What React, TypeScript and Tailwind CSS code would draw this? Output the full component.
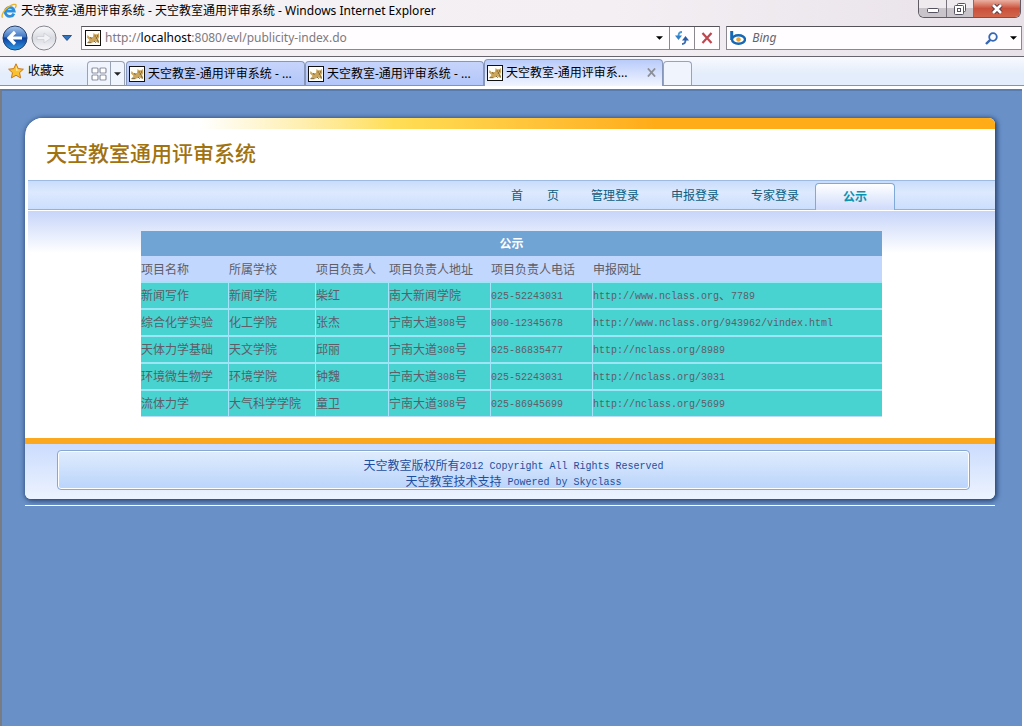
import { Fragment } from 'react'
import type { ReactNode } from 'react'

const PAGE_TITLE = '天空教室-通用评审系统 - 天空教室通用评审系统 - Windows Internet Explorer'

const browserTabs = [
  { id: 1, label: '天空教室-通用评审系统 - ...', active: false },
  { id: 2, label: '天空教室-通用评审系统 - ...', active: false },
  { id: 3, label: '天空教室-通用评审系...', active: true },
]

const navItems = ['首　　页', '管理登录', '申报登录', '专家登录']

const columns = ['项目名称', '所属学校', '项目负责人', '项目负责人地址', '项目负责人电话', '申报网址']

const rows = [
  ['新闻写作', '新闻学院', '柴红', '南大新闻学院', '025-52243031', 'http://www.nclass.org、7789'],
  ['综合化学实验', '化工学院', '张杰', '宁南大道308号', '000-12345678', 'http://www.nclass.org/943962/vindex.html'],
  ['天体力学基础', '天文学院', '邱丽', '宁南大道308号', '025-86835477', 'http://nclass.org/8989'],
  ['环境微生物学', '环境学院', '钟魏', '宁南大道308号', '025-52243031', 'http://nclass.org/3031'],
  ['流体力学', '大气科学学院', '童卫', '宁南大道308号', '025-86945699', 'http://nclass.org/5699'],
]

// Latin runs are set in a half-width mono face so they line up with the Chinese glyphs
function Mixed({ text }: { text: string }) {
  return (
    <>
      {text.split(/([\x20-\x7e]+)/).map((part, i) =>
        i % 2 === 1 ? (
          <span key={i} className="font-['Liberation_Mono',monospace] text-[10px] leading-none align-[1px] whitespace-pre">{part}</span>
        ) : (
          <Fragment key={i}>{part}</Fragment>
        )
      )}
    </>
  )
}

function IeLogo() {
  return (
    <svg viewBox="0 0 16 16" className="w-4 h-4 shrink-0" aria-hidden="true">
      <path d="M12.9 10.6a4.5 4.5 0 1 1 .3-2.4H5" fill="none" stroke="#2a8fdc" strokeWidth="2.8" />
      <path d="M1.6 14.6C-.4 12.4 3.4 6.4 8 3.6 11.5 1.3 14.8.6 15.1 2.2c.2.9-.4 2-1 2.900" fill="none" stroke="#e8b326" strokeWidth="1.4" />
    </svg>
  )
}

function TomcatIcon() {
  return (
    <svg viewBox="0 0 16 16" className="w-4 h-4 shrink-0" aria-hidden="true">
      <rect x=".5" y=".5" width="15" height="15" fill="#fffef8" stroke="#111" />
      <path d="M8 7l.5-4 1.700 1.200h2L14 3l.2 4-1 2 .8 3.500h-2L10.500 11 8 12.500H2.500L4.500 10 2 7.500 2.500 5 4.500 7z" fill="#cba65c" />
      <path d="M2.500 12.700h4M9 11l2 1.700M12.500 9.500l1 3M5 7.500l1.500 1" stroke="#6d5527" strokeWidth=".9" fill="none" />
      <path d="M9.700 6h.9M12 6h.9M10.800 8h1.200" stroke="#4b3a17" strokeWidth="1" fill="none" />
    </svg>
  )
}

function Caret({ className = 'text-black' }: { className?: string }) {
  return (
    <svg viewBox="0 0 8 4" className={`w-[7px] h-1 shrink-0 ${className}`} aria-hidden="true">
      <path d="M0 0h8L4 4z" fill="currentColor" />
    </svg>
  )
}

function RoundButton({ label, forward = false }: { label: string; forward?: boolean }) {
  return (
    <button aria-label={label} className="w-[26px] h-[26px] shrink-0">
      <svg viewBox="0 0 26 26" className="w-full h-full">
        <defs>
          <linearGradient id="backFill" x1="0" y1="0" x2="0" y2="1">
            <stop offset="0" stopColor="#a9c7ec" />
            <stop offset=".45" stopColor="#3f76c4" />
            <stop offset=".5" stopColor="#0c3f9c" />
            <stop offset="1" stopColor="#2f9be8" />
          </linearGradient>
          <linearGradient id="forwardFill" x1="0" y1="0" x2="0" y2="1">
            <stop offset="0" stopColor="#fafafc" />
            <stop offset=".5" stopColor="#d9dbe2" />
            <stop offset="1" stopColor="#f7f7fa" />
          </linearGradient>
        </defs>
        <circle cx="13" cy="13" r="12" fill={forward ? 'url(#forwardFill)' : 'url(#backFill)'} stroke={forward ? '#85878e' : '#24416f'} />
        {forward ? (
          <path d="M6 11.5h7V8l7 5-7 5v-3.5H6z" fill="#f1f2f5" stroke="#c9cbd3" strokeWidth=".7" />
        ) : (
          <path d="M20 13H8M13 7l-6 6 6 6" fill="none" stroke="#fff" strokeWidth="3.2" />
        )}
      </svg>
    </button>
  )
}

function WindowControls() {
  return (
    <div className="flex h-[18px] mr-[3px] shrink-0 rounded-b-md border border-t-0 border-[#5f5a63] overflow-hidden">
      <button aria-label="Minimize" className="w-7 flex justify-center items-center border-r border-[#77727b] bg-linear-to-b from-[#eeeaee] from-50% to-[#c9c4ca] to-50%">
        <svg viewBox="0 0 12 5" className="w-3 h-[5px] mt-1"><rect x=".5" y=".5" width="11" height="4" rx="1" fill="#fff" stroke="#55515f" /></svg>
      </button>
      <button aria-label="Restore" className="w-[27px] flex justify-center items-center border-r border-[#77727b] bg-linear-to-b from-[#eeeaee] from-50% to-[#c9c4ca] to-50%">
        <svg viewBox="0 0 12 12" className="w-3 h-3" fill="#fff" stroke="#55515f">
          <rect x="3.5" y=".5" width="8" height="8" rx="1" />
          <rect x=".5" y="2.5" width="9" height="9" rx="1" />
          <rect x="3.5" y="5.5" width="3" height="3" />
        </svg>
      </button>
      <button aria-label="Close" className="w-[46px] flex justify-center items-center bg-linear-to-b from-[#eab0a2] via-[#c9503a] via-50% to-[#d1664c]">
        <svg viewBox="0 0 12 10" className="w-3 h-2.5">
          <path d="M2 1l8 8M10 1L2 9" stroke="#5a3a42" strokeWidth="4.6" />
          <path d="M2 1l8 8M10 1L2 9" stroke="#fff" strokeWidth="2.6" />
        </svg>
      </button>
    </div>
  )
}

function TitleBar() {
  return (
    <div className="flex h-[26px] items-start">
      <div className="flex flex-1 min-w-0 items-center gap-1 pl-px pt-[2px]">
        <IeLogo />
        <span className="truncate text-black leading-[18px]">{PAGE_TITLE}</span>
      </div>
      <WindowControls />
    </div>
  )
}

function AddressRow() {
  return (
    <div className="flex h-[30px] items-start pl-[2px] pr-[2px]">
      <div className="flex items-center h-6 gap-[3px] mr-2">
        <RoundButton label="Back" />
        <RoundButton label="Forward" forward />
        <button aria-label="Recent pages" className="w-3 flex justify-center ml-px">
          <svg viewBox="0 0 10 6" className="w-2.5 h-1.5"><path d="M.5.5h9L5 5.5z" fill="#3273bd" stroke="#123f7c" strokeWidth=".8" /></svg>
        </button>
      </div>
      <div className="flex flex-1 min-w-0 h-6 border border-[#8b8890] border-t-[#55535a] bg-[#fffdff]">
        <div className="flex flex-1 min-w-0 items-center pl-[3px] pr-1.5 gap-1">
          <TomcatIcon />
          {/* host part is emphasised the way the browser does it */}
          <span className="flex-1 min-w-0 truncate text-[#7c7a80] leading-5">
            http://<span className="text-black">localhost</span>:8080/evl/publicity-index.do
          </span>
          <button aria-label="Show address list"><Caret /></button>
        </div>
        <button aria-label="Refresh" className="w-[25px] border-l border-[#8b8890] flex items-center justify-center">
          <svg viewBox="0 0 16 14" className="w-4 h-3.5" fill="none" strokeWidth="1.8">
            <path d="M8 1C5.500 1 4.500 2.500 4.500 5" stroke="#4a9bd8" />
            <path d="M1 4.500h7L4.500 9z" fill="#2f80c8" />
            <path d="M8 13c2.500 0 3.500-1.500 3.500-4" stroke="#3c6fb4" />
            <path d="M8 9.500h7L11.500 5z" fill="#2a5ca6" />
          </svg>
        </button>
        <button aria-label="Stop" className="w-[25px] border-l border-[#8b8890] flex items-center justify-center">
          <svg viewBox="0 0 12 12" className="w-3 h-3"><path d="M1.5 1l9 10M10.5 1l-9 10" stroke="#bd4750" strokeWidth="2.2" /></svg>
        </button>
      </div>
      <div className="flex items-center w-[29%] h-6 ml-1.5 pl-[3px] pr-1 border border-[#8b8890] border-t-[#55535a] bg-[#fffdff]">
        <svg viewBox="0 0 16 14" className="w-4 h-3.5 shrink-0" aria-hidden="true">
          <path d="M1.7 0v9" stroke="#1667b4" strokeWidth="3" />
          <ellipse cx="8.500" cy="8.500" rx="6.500" ry="4.300" fill="#fff" stroke="#1667b4" strokeWidth="2.400" />
          <circle cx="8.500" cy="8.500" r="2.300" fill="#f2a32c" />
        </svg>
        <input
          aria-label="Search"
          placeholder="Bing"
          className="flex-1 min-w-0 ml-1.5 bg-transparent outline-none italic placeholder:text-[#66646a]"
        />
        <button aria-label="Search Bing" className="mr-3">
          <svg viewBox="0 0 13 13" className="w-[13px] h-[13px]" fill="none" stroke="#3467b4">
            <circle cx="8" cy="5" r="3.8" strokeWidth="1.8" />
            <path d="M5.200 7.800L1 12" strokeWidth="2.4" />
          </svg>
        </button>
        <button aria-label="Search options"><Caret /></button>
      </div>
    </div>
  )
}

function TabRow() {
  return (
    <div className="flex h-[30px] items-end border-t border-[#66646c] border-b border-b-[#8a94a4] bg-linear-to-b from-[#f8fafe] to-[#e4edfb] to-60%">
      <button className="flex items-center self-center gap-1 w-[87px] pl-2 text-black whitespace-nowrap">
        <svg viewBox="0 0 16 16" className="w-4 h-4" aria-hidden="true">
          <path d="M8 .8l2.200 4.800 5.200.6-3.900 3.500 1.100 5.200L8 12.300l-4.600 2.600 1.100-5.200L.6 6.200l5.200-.6z" fill="#fbc02d" stroke="#c9781a" />
          <path d="M8 2.500l1.500 4 3 .5L8 8z" fill="#fde58a" />
        </svg>
        收藏夹
      </button>
      <div className="flex h-6 w-[38px] shrink-0 mr-px rounded-t border border-b-0 border-[#9aa3b4] bg-[#f0f5fd]">
        <button aria-label="Quick tabs" className="flex-1 flex items-center justify-center">
          <svg viewBox="0 0 16 14" className="w-4 h-3.5" fill="#fff" stroke="#8d93a3" strokeWidth="1.2">
            <rect x="1" y="1" width="6" height="5" rx="1" />
            <rect x="9" y="1" width="6" height="5" rx="1" />
            <rect x="1" y="8" width="6" height="5" rx="1" />
            <rect x="9" y="8" width="6" height="5" rx="1" />
          </svg>
        </button>
        <button aria-label="Tab list" className="w-[14px] border-l border-[#9aa3b4] flex items-center justify-center"><Caret className="text-[#222]" /></button>
      </div>
      {browserTabs.map(tab =>
        tab.active ? (
          <div key={tab.id} className="flex items-center h-[27px] w-[179px] min-w-0 -mb-px pl-[2px] pr-1.5 pb-px rounded-t border border-b-0 border-[#8797bb] bg-linear-to-b from-[#b9cbfa] to-[#f1f5fe]">
            <button className="flex flex-1 min-w-0 items-center gap-[3px] text-black whitespace-nowrap">
              <TomcatIcon />
              {tab.label}
            </button>
            <button aria-label="Close tab">
              <svg viewBox="0 0 10 10" className="w-[9px] h-[9px]"><path d="M1 .5l8 9M9 .5l-8 9" stroke="#8c8f98" strokeWidth="2" /></svg>
            </button>
          </div>
        ) : (
          <button key={tab.id} className="flex items-center h-6 w-[179px] min-w-0 pl-[2px] gap-[3px] rounded-t border border-b-0 border-[#8797bb] bg-linear-to-b from-[#c6d4fb] to-[#b3c6f9] text-black whitespace-nowrap overflow-hidden">
            <TomcatIcon />
            {tab.label}
          </button>
        )
      )}
      <button aria-label="New tab" className="h-6 w-[29px] rounded-t border border-b-0 border-[#9aa3b4] bg-[#f0f5fd]" />
    </div>
  )
}

function SiteNav() {
  return (
    <nav className="flex h-[30px] ml-[3px] items-end justify-end pr-[100px] border-t border-[#9dbbe2] border-b border-b-[#8fb3df] bg-linear-to-b from-[#c8dcfa] via-[#dde9fe] via-40% to-[#cbdffd] text-[#0d5d80]">
      {navItems.map(item => (
        <a key={item} href="#" className="w-20 h-7 leading-7 text-center whitespace-nowrap">{item}</a>
      ))}
      <a href="#" aria-current="page" className="w-20 h-[27px] -mb-px leading-6 text-center font-bold text-[#0a93b0] rounded-t border border-b-0 border-[#7fa9d8] bg-linear-to-b from-white to-[#cfdbfb]">
        公示
      </a>
    </nav>
  )
}

function Cell({ children }: { children: ReactNode }) {
  return (
    <td className="p-0 pb-0.5 whitespace-nowrap bg-[#49d3d0] border-t-2 border-r border-t-[#9de6f6] border-r-[#a6e3fa] last:border-r-0">
      {children}
    </td>
  )
}

function PublicityTable() {
  return (
    <table className="w-full table-fixed border-separate border-spacing-0 border-b border-[#bcdcf8] text-[#5f5d68]">
      <caption className="h-[25px] leading-6 bg-[#70a4d5] text-white font-bold">公示</caption>
      <colgroup>
        <col className="w-[88px]" />
        <col className="w-[87px]" />
        <col className="w-[73px]" />
        <col className="w-[102px]" />
        <col className="w-[102px]" />
        <col />
      </colgroup>
      <thead>
        <tr className="h-[25px] bg-[#c2d7fd]">
          {columns.map(name => (
            <th key={name} scope="col" className="p-0 text-left font-normal whitespace-nowrap">{name}</th>
          ))}
        </tr>
      </thead>
      <tbody>
        {rows.map(row => (
          <tr key={row[0]} className="h-[27px]">
            {row.map((value, i) => (
              <Cell key={i}>
                <Mixed text={value} />
              </Cell>
            ))}
          </tr>
        ))}
      </tbody>
    </table>
  )
}

function SiteFooter() {
  return (
    <footer className="border-t-6 border-[#fba81f] bg-linear-to-b from-[#cbdcfd] to-[#edf3ff] pl-8 pr-[25px] pt-1.5 pb-[9px]">
      <div className="h-10 rounded-sm border border-[#86a8d3] shadow-[inset_0_0_0_1px_#fff] pt-1.5 text-center leading-4 text-[#1e4f9e] bg-linear-to-b from-[#e0ecfd] to-[#bad4fb]">
        <p><Mixed text="天空教室版权所有2012 Copyright All Rights Reserved" /></p>
        <p><Mixed text="天空教室技术支持 Powered by Skyclass" /></p>
      </div>
    </footer>
  )
}

export default function App() {
  return (
    <div className="min-h-screen flex flex-col bg-white text-[12px] leading-4 font-['Noto_Sans','Noto_Sans_CJK_SC',sans-serif]">
      <header>
        <div className="bg-linear-to-r from-[#f5f2f6] via-[#f3eff3] via-60% to-[#e8e2e8]">
          <TitleBar />
          <AddressRow />
        </div>
        <TabRow />
      </header>

      <main className="flex-1 mt-[3px] mr-[2px] border-l-2 border-t-2 border-l-[#777b84] border-t-[#587cae] bg-[#6991c8] pt-[27px] pl-[23px] pr-[27px] font-['Noto_Sans_CJK_SC',sans-serif]">
        <div className="rounded-tl-[18px] rounded-tr-md rounded-b-md bg-white shadow-[1px_1px_5px_1px_#243f6b] overflow-hidden">
          <div className="h-[11px] bg-linear-to-r from-white from-18% via-[#ffde55] via-38% to-[#ffac18] to-65%" />
          <h1 className="h-[51px] pl-[21px] leading-[46px] text-[21px] font-medium text-[#a17210]">天空教室通用评审系统</h1>
          <SiteNav />
          <div className="ml-[3px] border-t border-white px-[113px] pt-5 pb-[21px] bg-linear-to-b from-[#c7d5f9] to-white to-[42px]">
            <PublicityTable />
          </div>
          <SiteFooter />
        </div>
        <hr className="mt-1.5 border-white" />
      </main>
    </div>
  )
}
